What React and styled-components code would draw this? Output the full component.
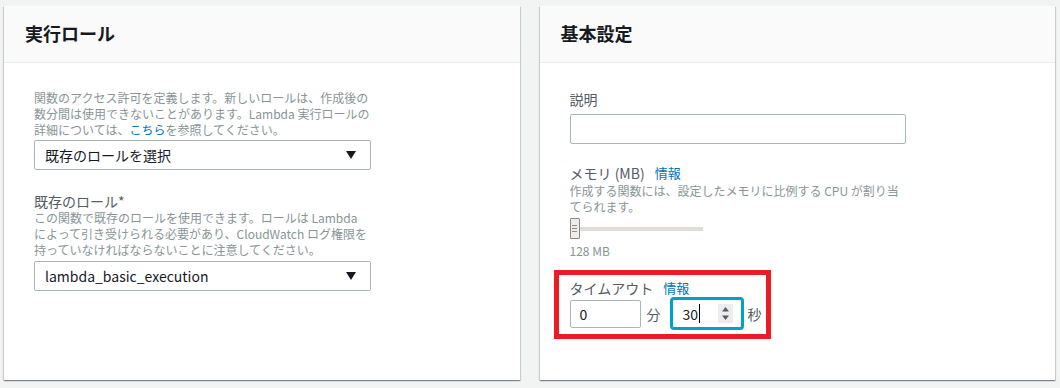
import React from 'react';
import styled, { createGlobalStyle } from 'styled-components';

const GlobalStyle = createGlobalStyle`
    body {
        margin: 0;
        background-color: #f2f3f3;
        font-family: "Noto Sans CJK JP", "Noto Sans", sans-serif;
        color: #16191f;
    }
`;

const App = () => {
    return (
        <>
            <GlobalStyle />
            <Pagina>
                <Panel>
                    <Cabecera>
                        <Titulo>実行ロール</Titulo>
                    </Cabecera>
                    <Cuerpo>
                        <Ayuda>
                            関数のアクセス許可を定義します。新しいロールは、作成後の<br />
                            数分間は使用できないことがあります。Lambda 実行ロールの<br />
                            詳細については、<Enlace>こちら</Enlace>を参照してください。
                        </Ayuda>
                        <Selector $top={2}>
                            <span>既存のロールを選択</span>
                            <Flecha />
                        </Selector>

                        <Campo $top={22}>
                            <Etiqueta>既存のロール*</Etiqueta>
                            <Ayuda>
                                この関数で既存のロールを使用できます。ロールは Lambda<br />
                                によって引き受けられる必要があり、CloudWatch ログ権限を<br />
                                持っていなければならないことに注意してください。
                            </Ayuda>
                            <Selector $top={3}>
                                <span>lambda_basic_execution</span>
                                <Flecha />
                            </Selector>
                        </Campo>
                    </Cuerpo>
                </Panel>

                <Panel>
                    <Cabecera>
                        <Titulo>基本設定</Titulo>
                    </Cabecera>
                    <Cuerpo>
                        <Etiqueta>説明</Etiqueta>
                        <Entrada />

                        <Campo $top={20}>
                            <Etiqueta>
                                メモリ (MB)<Info>情報</Info>
                            </Etiqueta>
                            <Ayuda $top={1}>
                                作成する関数には、設定したメモリに比例する CPU が割り当<br />
                                てられます。
                            </Ayuda>
                            <Deslizador>
                                <Mango>
                                    <Raya />
                                    <Raya />
                                    <Raya />
                                </Mango>
                                <Pista />
                            </Deslizador>
                            <Valor>128 MB</Valor>
                        </Campo>

                        <Resaltado>
                            <Etiqueta>
                                タイムアウト<Info>情報</Info>
                            </Etiqueta>
                            <Fila>
                                <Numero>0</Numero>
                                <Unidad>分</Unidad>
                                <NumeroActivo>
                                    <span>30</span>
                                    <Cursor />
                                    <Giro>
                                        <svg width="15" height="19" viewBox="0 0 15 19">
                                            <path d="M7.5 3 L11 7.5 L4 7.5 Z" fill="#545b64" />
                                            <path d="M7.5 16 L11 11.5 L4 11.5 Z" fill="#545b64" />
                                        </svg>
                                    </Giro>
                                </NumeroActivo>
                                <Unidad $last>秒</Unidad>
                            </Fila>
                        </Resaltado>
                    </Cuerpo>
                </Panel>
            </Pagina>
        </>
    );
}

const Flecha = () => (
    <svg width="10" height="8" viewBox="0 0 10 8">
        <path d="M0 0 L10 0 L5 8 Z" fill="#16191f" />
    </svg>
);


const Pagina = styled.div`
    display: grid;
    grid-template-columns: 1fr 1fr;
    gap: 20px;
    padding: 6px 5px 8px 4px;
`;

const Panel = styled.section`
    min-height: 374px;
    box-sizing: border-box;
    background-color: #fff;
    box-shadow: 0 1px 1px 0 rgba(0, 28, 36, 0.35),
                1px 1px 1px 0 rgba(0, 28, 36, 0.12),
                -1px 1px 1px 0 rgba(0, 28, 36, 0.12);
`;

const Cabecera = styled.header`
    height: 57px;
    box-sizing: border-box;
    display: flex;
    align-items: center;
    padding: 0 20px 3px 21px;
    background-color: #fafafa;
    border-bottom: 1px solid #eaeded;
`;

const Titulo = styled.h2`
    margin: 0;
    font-size: 18px;
    line-height: 22px;
    font-weight: bold;
    color: #16191f;
`;

const Cuerpo = styled.div`
    display: flex;
    flex-direction: column;
    align-items: flex-start;
    padding: 27px 30px 20px;
`;

const Campo = styled.div`
    display: flex;
    flex-direction: column;
    align-items: flex-start;
    margin-top: ${props => props.$top || 0}px;
`;

const Etiqueta = styled.label`
    display: flex;
    align-items: center;
    font-size: 14px;
    line-height: 18px;
    color: #545b64;
`;

const Info = styled.a`
    margin-left: 10px;
    font-size: 13px;
    color: #0073bb;
`;

const Ayuda = styled.p`
    margin: ${props => props.$top || 0}px 0 0;
    font-size: 12px;
    line-height: 16px;
    color: #879596;
    white-space: nowrap;
`;

const Enlace = styled.a`
    color: #0073bb;
`;

const Selector = styled.div`
    width: 337px;
    height: 30px;
    box-sizing: border-box;
    margin-top: ${props => props.$top || 0}px;
    display: flex;
    align-items: center;
    justify-content: space-between;
    padding: 0 14px 0 10px;
    border: 1px solid #aab7b8;
    border-radius: 2px;
    font-size: 14px;
    color: #16191f;
`;

const Entrada = styled.div`
    width: 336px;
    height: 30px;
    box-sizing: border-box;
    margin-top: 6px;
    border: 1px solid #aab7b8;
    border-radius: 2px;
`;

const Deslizador = styled.div`
    display: flex;
    align-items: center;
    margin-top: 3px;
    height: 21px;
`;

const Mango = styled.div`
    width: 10px;
    height: 21px;
    box-sizing: border-box;
    display: flex;
    flex-direction: column;
    justify-content: center;
    align-items: center;
    gap: 2px;
    background-color: #eeebe9;
    border: 1px solid #8e8985;
    border-radius: 1px;
`;

const Raya = styled.span`
    width: 5px;
    height: 1px;
    background-color: #8e8985;
`;

const Pista = styled.div`
    width: 123px;
    height: 4px;
    background-color: #e2dcd9;
`;

const Valor = styled.span`
    margin-top: 4px;
    font-size: 12px;
    line-height: 16px;
    color: #879596;
`;

const Resaltado = styled.div`
    display: inline-flex;
    flex-direction: column;
    margin: 11px 0 0 -16px;
    padding: 4px 4px 4px 11px;
    border: 5px solid #ed1c24;
`;

const Fila = styled.div`
    display: flex;
    align-items: center;
    height: 33px;
`;

const Numero = styled.div`
    width: 71px;
    height: 28px;
    box-sizing: border-box;
    display: flex;
    align-items: center;
    padding-left: 9px;
    border: 1px solid #aab7b8;
    border-radius: 2px;
    font-size: 14px;
    color: #16191f;
`;

const NumeroActivo = styled.div`
    width: 74px;
    height: 33px;
    box-sizing: border-box;
    display: flex;
    align-items: center;
    padding: 0 8px 0 10px;
    border: 3px solid #00a1c9;
    border-radius: 4px;
    font-size: 14px;
    color: #16191f;
`;

const Cursor = styled.span`
    width: 1px;
    height: 19px;
    margin-left: 1px;
    background-color: #000;
`;

const Giro = styled.span`
    display: flex;
    margin-left: auto;
    background-color: #ececec;
`;

const Unidad = styled.span`
    margin: ${props => props.$last ? '0 0 0 4px' : '0 9px 0 6px'};
    font-size: 14px;
    color: #545b64;
`;

export default App;
